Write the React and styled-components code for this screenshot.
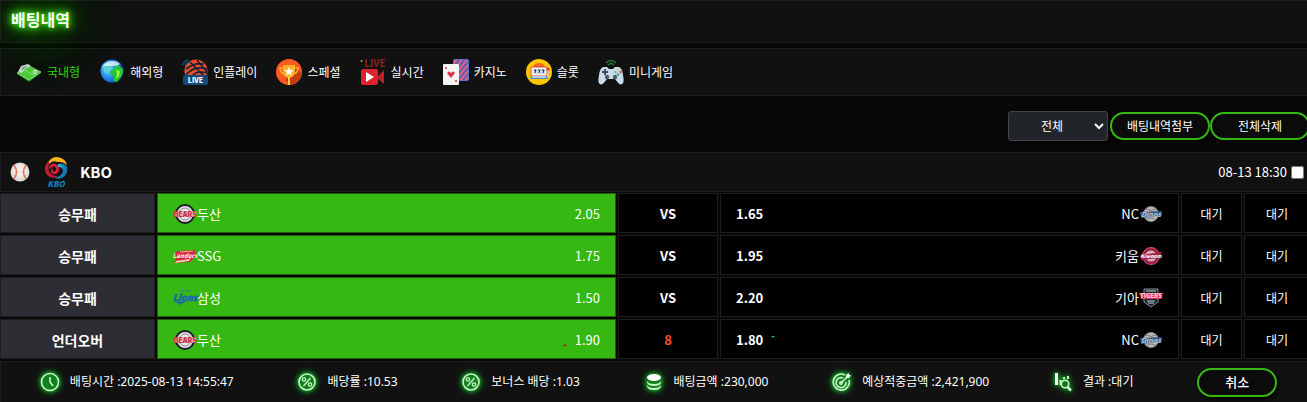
import React from 'react';
import styled, { createGlobalStyle, css } from 'styled-components';

const GlobalStyle = createGlobalStyle`
  * {
    box-sizing: border-box;
  }

  body {
    margin: 0;
    overflow-x: hidden;
    background-color: #080808;
    color: #fff;
    font-family: 'Noto Sans', 'Noto Sans CJK KR', sans-serif;
    font-size: 12px;
    line-height: 18px;
  }

  button,
  select {
    font: inherit;
    color: inherit;
  }
`;

/* menu icons */

const FieldIcon = () => (
  <MenuIcon viewBox="0 0 26 26">
    <path d="M1 15 13 23 25 14 13 8Z" fill="#178a2c" />
    <path d="M1 14 13 21 25 13 13 7Z" fill="#52c83c" />
    <path d="M7 10 19 17 M13 7 25 13 13 21 1 14Z" fill="none" stroke="#a5e884" strokeWidth="0.8" />
    <path d="M2 13 5 7 12 5 15 7 9 10 6 14Z" fill="#c9d8d4" />
    <path d="M5 12 7 8 12 7 9 9Z" fill="#6f9485" />
    <circle cx="19" cy="13" r="2" fill="#fff" />
    <circle cx="19" cy="13" r="0.8" fill="#222" />
  </MenuIcon>
);

const GlobeIcon = () => (
  <MenuIcon viewBox="0 0 26 26">
    <defs>
      <radialGradient id="ocean" cx="35%" cy="45%" r="70%">
        <stop offset="0" stopColor="#6cd0ff" />
        <stop offset="0.5" stopColor="#218be8" />
        <stop offset="1" stopColor="#0636a0" />
      </radialGradient>
    </defs>
    <circle cx="13" cy="12" r="11.5" fill="url(#ocean)" />
    <path d="M3 8 7 5 12 5 14 9 10 12 9 15 5 13Z" fill="#62d4cd" opacity="0.8" />
    <path d="M14 7 19 6 24 10 24 14 22 18 18 23 14 22 15 17 11 15 12 11 17 9Z" fill="#21c832" />
    <path d="M17 11 21 12 20 17 17 20 18 15Z" fill="#a6f22d" />
    <path d="M3 8C6 1 17 0 21 5C16 9 9 5 3 8Z" fill="#fff" opacity="0.75" />
  </MenuIcon>
);

const InplayIcon = () => (
  <MenuIcon viewBox="0 0 26 26">
    <circle cx="14" cy="12" r="11.5" fill="#f04b2b" />
    <path
      d="M4 10Q13 3 22 5M4 16Q12 6 25 10M10 17Q15 11 25 14M8 3 22 17M15 1 25 13"
      fill="none"
      stroke="#132238"
      strokeWidth="1.7"
    />
    <path d="M1 6Q2 2 6 1M3 7Q4 4 7 3" fill="none" stroke="#164b78" strokeWidth="1.5" />
    <rect x="1" y="16" width="25" height="10" rx="2" fill="#124b78" />
    <text x="13.5" y="24" fontSize="7" fontWeight="800" textAnchor="middle" fill="#fff">LIVE</text>
  </MenuIcon>
);

const TrophyIcon = () => (
  <MenuIcon viewBox="0 0 26 26">
    <circle cx="13" cy="13" r="13" fill="#fb5a20" />
    <path d="M19 7 25.5 14A13 13 0 0 1 15 26L9 21 17 14Z" fill="#c63b15" />
    <path d="M8 9H4Q4 15 10 15M18 9H22Q22 15 16 15" fill="none" stroke="#ffb437" strokeWidth="1.5" />
    <path d="M7 6H19V12Q19 18 13 19Q7 18 7 12Z" fill="#ffb52b" />
    <path d="M12 18H14V26H12Z" fill="#ffcb45" />
    <path d="m13 8 1.3 3 3.2.3-2.4 2.1.7 3.1-2.8-1.7-2.8 1.7.7-3.1-2.4-2.1 3.2-.3Z" fill="#fff" />
  </MenuIcon>
);

const CameraIcon = () => (
  <MenuIcon viewBox="0 0 26 26">
    <text x="15" y="8" fontSize="10" fontWeight="600" textAnchor="middle" fill="#8e2023">LIVE</text>
    <circle cx="1.5" cy="2" r="0.9" fill="#d7a638" />
    <rect x="1" y="10" width="17" height="16" rx="2" fill="#dc222c" />
    <path d="M18 17 24 11V25L18 20Z" fill="#ba2029" />
    <path d="m6 13 8 5-8 5Z" fill="#fff" />
  </MenuIcon>
);

const CardsIcon = () => (
  <MenuIcon viewBox="0 0 26 26">
    <defs>
      <pattern id="stripes" width="4" height="4" patternUnits="userSpaceOnUse" patternTransform="rotate(40)">
        <rect width="4" height="4" fill="#ed5e78" />
        <rect width="2" height="4" fill="#5461bb" />
      </pattern>
    </defs>
    <rect x="10.5" y="0.5" width="15" height="21" rx="1" fill="url(#stripes)" stroke="#5973c9" />
    <rect x="0" y="5" width="16" height="21" rx="1" fill="#f7f4f5" />
    <path d="M8 19 4.5 15Q4 12.5 6.5 12.5L8 14 9.5 12.5Q12 12.5 11.5 15Z" fill="#df3445" />
    <circle cx="3" cy="9" r="1" fill="#df3445" />
    <circle cx="13" cy="22" r="1" fill="#df3445" />
  </MenuIcon>
);

const SlotIcon = () => (
  <MenuIcon viewBox="0 0 26 26">
    <circle cx="13" cy="13" r="13" fill="#ffc600" />
    <path d="M7 8Q8 4 13 4T19 8Z" fill="#f26b21" />
    <rect x="5" y="8" width="16" height="9" rx="1.5" fill="#f3f7fb" stroke="#df4b2c" />
    <rect x="7" y="10" width="12" height="5" fill="#c9ddeb" />
    <path d="M8 11H10L9 14M12 11H14L13 14M16 11H18L17 14" fill="none" stroke="#252d3a" />
    <path d="M5 17H21L22 20H4Z" fill="#4a89be" />
    <path d="M6 18H20" stroke="#fff" strokeWidth="1.2" />
    <path d="M22 18V10" stroke="#d6d6d6" strokeWidth="1.2" />
    <circle cx="22" cy="10" r="1.5" fill="#f0282d" />
  </MenuIcon>
);

const GamepadIcon = () => (
  <MenuIcon viewBox="0 0 26 26">
    <path d="M8 4Q13-1 18 4M10 6Q13 3 16 6" fill="none" stroke="#217c3c" strokeWidth="1.5" />
    <path
      d="M5 8H9L11 10H15L17 8H21Q24 9 25 16Q27 25 23 25.5Q21 25.5 17 20H9Q5 25.5 3 25.5Q-1 25 1 16Q2 9 5 8Z"
      fill="#c9dbe8"
    />
    <path d="M7 10V16M4 13H10" stroke="#424e5c" strokeWidth="2" />
    <circle cx="9" cy="18" r="2.2" fill="#4e5b69" />
    <circle cx="17" cy="18" r="2.2" fill="#4e5b69" />
    <circle cx="20" cy="10.5" r="1.2" fill="#f5c73b" />
    <circle cx="22.5" cy="13" r="1.2" fill="#ed4250" />
    <circle cx="17.5" cy="13" r="1.2" fill="#5cafe8" />
    <circle cx="20" cy="15.5" r="1.2" fill="#46ad70" />
  </MenuIcon>
);

/* league and team logos */

const Baseball = () => (
  <svg width="20" height="20" viewBox="0 0 20 20" aria-hidden="true">
    <circle cx="10" cy="10" r="9.5" fill="#e0dbd4" />
    <circle cx="10" cy="9" r="7" fill="#efece8" />
    <path d="M4 3Q9 10 4 17M16 3Q11 10 16 17" fill="none" stroke="#dc6b51" strokeWidth="1.3" />
    <path d="M4 7 7 6M5 10H8M4 13 7 14M16 7 13 6M15 10H12M16 13 13 14" stroke="#e4917c" strokeWidth="0.8" />
  </svg>
);

const KboLogo = () => (
  <svg width="24" height="32" viewBox="0 0 24 32" aria-hidden="true">
    <path d="M7 4C-1 7-1 18 6 21Q10 23 14 20Q7 20 5 15Q3 9 7 4Z" fill="#c51b32" />
    <path d="M5 5Q10-1 17 2Q22 4 23 9Q18 5 13 6Q9 4 5 8Z" fill="#f8b517" />
    <path d="M5 14C4 8 11 5 14 10C17 15 13 19 10 18C6 18 6 13 9 11C7 15 10 17 12 14C13 10 8 9 5 14Z" fill="#d5203b" />
    <path d="M14 8Q20 6 23 11C25 18 18 25 10 22Q19 20 19 14Q18 11 14 11Z" fill="#147db5" />
    <path d="M14 8Q19 9 20 15Q19 10 14 11Z" fill="#45b4df" />
    <text x="12" y="31" fontSize="8" fontWeight="800" fontStyle="italic" textAnchor="middle" fill="#147fba">KBO</text>
  </svg>
);

const BearsLogo = () => (
  <TeamLogo viewBox="0 0 24 20">
    <circle cx="12" cy="10" r="9" fill="#e9e5e6" stroke="#1b1930" strokeWidth="2" />
    <circle cx="12" cy="10" r="6" fill="none" stroke="#8d8490" />
    <path d="M1 7H23V13H1Z" fill="#e8b4b6" />
    <text x="12" y="13" fontSize="7" fontWeight="800" textAnchor="middle" fill="#c32d43">BEARS</text>
  </TeamLogo>
);

const LandersLogo = () => (
  <TeamLogo viewBox="0 0 24 20">
    <path d="M4 5 22 4 23 10 17 16 1 17 4 11 1 9Z" fill="#d22a3d" />
    <path d="M3 15 16 13 19 10 16 15 2 17Z" fill="#efd3a4" />
    <path d="M7 6 20 5" stroke="#f7ada0" />
    <text x="12" y="12" fontSize="6" fontWeight="800" fontStyle="italic" textAnchor="middle" fill="#ffe3d8">Landers</text>
  </TeamLogo>
);

const LionsLogo = () => (
  <TeamLogo viewBox="0 0 24 20">
    <path d="M7 3H18" stroke="#2d83a0" />
    <text x="12" y="13" fontSize="9" fontWeight="800" fontStyle="italic" textAnchor="middle" fill="#1b68a8" stroke="#1b68a8" strokeWidth="0.5">Lions</text>
    <path d="M1 14 14 13 6 17 5 15Z" fill="#1b68a8" />
  </TeamLogo>
);

const DinosLogo = () => (
  <TeamLogo viewBox="0 0 24 20">
    <circle cx="12" cy="10" r="7.5" fill="#bcb8b8" stroke="#7d8790" />
    <path d="M7 5Q12 8 17 5M7 16Q12 12 17 16" fill="none" stroke="#81777b" />
    <path d="M1 8 23 7 22 12 2 14Z" fill="#365782" />
    <text x="12" y="13" fontSize="7" fontWeight="800" fontStyle="italic" textAnchor="middle" fill="#a9bfd8">Dinos</text>
  </TeamLogo>
);

const HeroesLogo = () => (
  <TeamLogo viewBox="0 0 24 20">
    <circle cx="12" cy="10" r="8.5" fill="#9e1c42" stroke="#c95b75" />
    <circle cx="12" cy="10" r="5.5" fill="#d9b7bd" />
    <path d="M1 9 23 6 21 12 2 14Z" fill="#a02346" />
    <text x="12" y="12" fontSize="5" fontWeight="800" fontStyle="italic" textAnchor="middle" fill="#fff">Kiwoom</text>
  </TeamLogo>
);

const TigersLogo = () => (
  <TeamLogo viewBox="0 0 24 20">
    <path d="M5 1H19V14L12 19 5 14Z" fill="#17242d" stroke="#87929a" />
    <path d="M7 3H17M8 13H16M9 15H15" stroke="#c6ced2" />
    <path d="M0 5H24L22 11H2Z" fill="#e2344c" />
    <text x="12" y="10" fontSize="6" fontWeight="800" textAnchor="middle" fill="#ffc9cd">TIGERS</text>
  </TeamLogo>
);

/* summary icons */

const ClockIcon = () => (
  <GlowIcon viewBox="0 0 20 20">
    <circle cx="10" cy="10" r="8.5" fill="#128020" />
    <path d="M10 5V10L13 14" />
  </GlowIcon>
);

const PercentIcon = () => (
  <GlowIcon viewBox="0 0 20 20">
    <circle cx="10" cy="10" r="8" fill="#128020" />
    <g strokeWidth="1.3">
      <path d="M13.5 6 6.5 14" />
      <circle cx="7" cy="7.5" r="1.7" />
      <circle cx="13" cy="12.5" r="1.7" />
    </g>
  </GlowIcon>
);

const CoinsIcon = () => (
  <GlowIcon viewBox="0 0 20 20">
    <path d="M3 5H17V14Q16 18 10 18T3 14Z" fill="#128020" stroke="none" />
    <ellipse cx="10" cy="5.5" rx="7" ry="3.5" fill="#fff" stroke="none" />
    <path d="M3 9Q4 12 10 12T17 9V10.500Q16 14 10 14T3 10.500ZM3 13Q4 16 10 16T17 13V14.500Q16 18 10 18T3 14.500Z" fill="#c8f6c5" stroke="none" />
  </GlowIcon>
);

const TargetIcon = () => (
  <GlowIcon viewBox="0 0 20 20">
    <path d="M13 3A8 8 0 1 0 17 8" fill="#128020" />
    <path d="M11 6A5 5 0 1 0 14 10" />
    <path d="m9 11 6-6" />
    <circle cx="9" cy="11" r="1.2" />
    <path d="M14 3 17 1V3H19L17 6H14Z" fill="#fff" stroke="none" />
  </GlowIcon>
);

const ResultIcon = () => (
  <GlowIcon viewBox="0 0 20 20">
    <path d="M3.5 1V13" stroke="#fff" strokeWidth="3" />
    <path d="M7.5 8V13" strokeWidth="2" />
    <circle cx="12" cy="12" r="3.7" />
    <path d="m14.5 15 3.5 3.5" strokeWidth="2.5" />
    <path d="M11 5V7M15 4V7" strokeWidth="2" />
  </GlowIcon>
);

const menu = [
  { label: '국내형', Icon: FieldIcon, active: true },
  { label: '해외형', Icon: GlobeIcon },
  { label: '인플레이', Icon: InplayIcon },
  { label: '스페셜', Icon: TrophyIcon },
  { label: '실시간', Icon: CameraIcon },
  { label: '카지노', Icon: CardsIcon },
  { label: '슬롯', Icon: SlotIcon },
  { label: '미니게임', Icon: GamepadIcon },
];

const bets = [
  { type: '승무패', home: '두산', HomeLogo: BearsLogo, homeOdds: '2.05', middle: 'VS', awayOdds: '1.65', away: 'NC', AwayLogo: DinosLogo },
  { type: '승무패', home: 'SSG', HomeLogo: LandersLogo, homeOdds: '1.75', middle: 'VS', awayOdds: '1.95', away: '키움', AwayLogo: HeroesLogo },
  { type: '승무패', home: '삼성', HomeLogo: LionsLogo, homeOdds: '1.50', middle: 'VS', awayOdds: '2.20', away: '기아', AwayLogo: TigersLogo },
  { type: '언더오버', home: '두산', HomeLogo: BearsLogo, homeOdds: '1.90', middle: '8', awayOdds: '1.80', away: 'NC', AwayLogo: DinosLogo, line: true },
];

const summary = [
  { label: '배팅시간', value: '2025-08-13 14:55:47', Icon: ClockIcon },
  { label: '배당률', value: '10.53', Icon: PercentIcon },
  { label: '보너스 배당', value: '1.03', Icon: PercentIcon },
  { label: '배팅금액', value: '230,000', Icon: CoinsIcon },
  { label: '예상적중금액', value: '2,421,900', Icon: TargetIcon },
  { label: '결과', value: '대기', Icon: ResultIcon },
];

const BetRow = ({ bet }) => {
  const { HomeLogo, AwayLogo } = bet;
  return (
    <tr>
      <TypeCell scope="row">{bet.type}</TypeCell>
      <PickCell $picked>
        <Pick>
          <Team><HomeLogo />{bet.home}</Team>
          <Odds>
            {bet.line && <Arrow $up viewBox="0 0 4 2"><path d="M0 2 2 0 4 2Z" /></Arrow>}
            {bet.homeOdds}
          </Odds>
        </Pick>
      </PickCell>
      <MiddleCell $line={bet.line}>{bet.middle}</MiddleCell>
      <PickCell>
        <Pick>
          <Odds $bold>
            {bet.awayOdds}
            {bet.line && <Arrow viewBox="0 0 4 2"><path d="M0 0H4L2 2Z" /></Arrow>}
          </Odds>
          <Team>{bet.away}<AwayLogo /></Team>
        </Pick>
      </PickCell>
      <Cell>대기</Cell>
      <Cell>대기</Cell>
    </tr>
  );
};

const App = () => (
  <>
    <GlobalStyle />
    <Page>
      <TitleBar>
        <Title>배팅내역</Title>
      </TitleBar>
      <Menu>
        {menu.map(({ label, Icon, active }) => (
          <MenuLink key={label} href="#" $active={active}>
            <Icon />
            {label}
          </MenuLink>
        ))}
      </Menu>
      <Toolbar>
        <Filter aria-label="전체" defaultValue="all">
          <option value="all">전체</option>
        </Filter>
        <Actions>
          <PillButton type="button" $wide>배팅내역첨부</PillButton>
          <PillButton type="button" $wide>전체삭제</PillButton>
        </Actions>
      </Toolbar>
      <LeagueBar>
        <Baseball />
        <KboLogo />
        <LeagueName>KBO</LeagueName>
        <MatchTime>
          08-13 18:30
          <Check type="checkbox" />
        </MatchTime>
      </LeagueBar>
      <BetTable>
        <colgroup>
          <Col $width="155px" />
          <Col />
          <Col $width="100px" />
          <Col />
          <Col $width="61px" />
          <Col $width="66px" />
        </colgroup>
        <tbody>
          {bets.map((bet, i) => <BetRow key={i} bet={bet} />)}
        </tbody>
      </BetTable>
      <Summary>
        {summary.map(({ label, value, Icon }) => (
          <SummaryItem key={label}>
            <Icon />
            <span>{label} :{value}</span>
          </SummaryItem>
        ))}
        <PillButton type="button">취소</PillButton>
      </Summary>
    </Page>
  </>
);

export default App;

const panel = css`
  background-color: #111;
  border: 1px solid #1e1e1e;
`;

const narrowFont = css`
  font-family: 'Noto Sans CJK KR', 'Noto Sans', sans-serif;
`;

/* the list runs slightly past the right edge of the window */
const Page = styled.main`
  margin-right: -3px;
`;

const TitleBar = styled.header`
  ${panel}
  height: 43px;
  padding: 8px 10px;
`;

const Title = styled.h1`
  ${narrowFont}
  position: relative;
  z-index: 1;
  width: max-content;
  margin: 0;
  font-size: 16px;
  line-height: 20px;
  font-weight: 700;
  text-shadow: 0 0 5px #36d80a, 0 0 8px #36d80a, 0 0 12px #36b812, 0 0 20px #2f9e10, 0 0 50px #36b812, 0 0 80px #36b812;
`;

const Menu = styled.nav`
  ${panel}
  ${narrowFont}
  display: flex;
  align-items: center;
  gap: 19px;
  height: 48px;
  margin-top: 5px;
  padding: 0 15px;
`;

const MenuLink = styled.a`
  display: flex;
  align-items: center;
  gap: 5px;
  color: ${({ $active }) => ($active ? '#35d812' : '#fff')};
  text-decoration: none;
  white-space: nowrap;
`;

const MenuIcon = styled.svg.attrs({ 'aria-hidden': true })`
  width: 26px;
  height: 26px;
  flex: none;
  overflow: visible;
`;

const Toolbar = styled.div`
  display: flex;
  justify-content: flex-end;
  align-items: center;
  gap: 2px;
  padding: 15px 0 11px;
`;

const Actions = styled.div`
  display: flex;
`;

const Filter = styled.select`
  width: 100px;
  height: 30px;
  background-color: #212529;
  border: 1px solid #444;
  border-radius: 3px;
  box-shadow: 2px 2px 4px #000;
  text-align: center;
  text-align-last: center;
`;

const PillButton = styled.button`
  ${narrowFont}
  width: ${({ $wide }) => ($wide ? '100px' : '80px')};
  height: ${({ $wide }) => ($wide ? '28px' : '29px')};
  padding: 0;
  background-color: #0b0b0b;
  border: 2px solid #36b812;
  border-radius: 15px;
  box-shadow: 2px 2px 4px #000;
  font-size: ${({ $wide }) => ($wide ? '12px' : '13px')};
  font-weight: ${({ $wide }) => ($wide ? 400 : 500)};
  line-height: 18px;
`;

const LeagueBar = styled.div`
  ${panel}
  ${narrowFont}
  display: flex;
  align-items: center;
  height: 40px;
  padding: 0 3px 0 9px;

  svg + svg {
    margin-left: 14px;
  }
`;

const LeagueName = styled.h2`
  margin: 0 0 0 12px;
  font-size: 15px;
  line-height: 20px;
  font-weight: 600;
`;

const MatchTime = styled.label`
  display: flex;
  align-items: center;
  margin-left: auto;
  font-size: 13px;
`;

const Check = styled.input`
  width: 13px;
  height: 13px;
  margin: 0 2px 0 4px;
`;

const BetTable = styled.table`
  ${narrowFont}
  table-layout: fixed;
  width: calc(100% + 4px);
  margin: -1px -2px 0;
  border-spacing: 2px;
`;

const Col = styled.col`
  width: ${({ $width }) => $width || 'auto'};
`;

const Cell = styled.td`
  height: 40px;
  padding: 1px 0 0;
  background-color: #000;
  border: 1px solid #1e1e1e;
  text-align: center;
`;

const TypeCell = styled(Cell).attrs({ as: 'th' })`
  background-color: #2e2d33;
  font-size: 14px;
  font-weight: 600;
`;

const PickCell = styled(Cell)`
  padding: 2px 15px 0;
  background-color: ${({ $picked }) => ($picked ? '#36b812' : '#000')};
  border: ${({ $picked }) => ($picked ? '1px solid #1f5f10' : '1px solid #1e1e1e')};
  font-size: 13px;
`;

const MiddleCell = styled(Cell)`
  color: ${({ $line }) => ($line ? '#ff4a3a' : '#fff')};
  font-size: 13px;
  font-weight: 700;
`;

const Pick = styled.div`
  display: flex;
  justify-content: space-between;
  align-items: center;
`;

const Team = styled.span`
  display: flex;
  align-items: center;
`;

const TeamLogo = styled.svg.attrs({ 'aria-hidden': true })`
  width: 24px;
  height: 20px;
  overflow: visible;
`;

const Odds = styled.span`
  display: flex;
  align-items: center;
  gap: 8px;
  font-weight: ${({ $bold }) => ($bold ? 700 : 400)};
`;

const Arrow = styled.svg.attrs({ 'aria-hidden': true })`
  width: 4px;
  height: 2px;
  fill: ${({ $up }) => ($up ? '#a0151d' : '#12b886')};
  ${({ $up }) => ($up ? 'margin-top: 9px;' : 'margin-bottom: 7px;')}
`;

const Summary = styled.footer`
  ${panel}
  display: flex;
  justify-content: space-around;
  align-items: center;
  height: 42px;
  padding-left: 7px;
`;

const SummaryItem = styled.div`
  display: flex;
  align-items: center;
  gap: 10px;
  white-space: nowrap;
`;

const GlowIcon = styled.svg.attrs({ 'aria-hidden': true })`
  width: 20px;
  height: 20px;
  fill: none;
  stroke: #c8f6c5;
  stroke-width: 1.6;
  filter: drop-shadow(0 0 2px #18b52a) drop-shadow(0 0 3px #12901f);
`;
